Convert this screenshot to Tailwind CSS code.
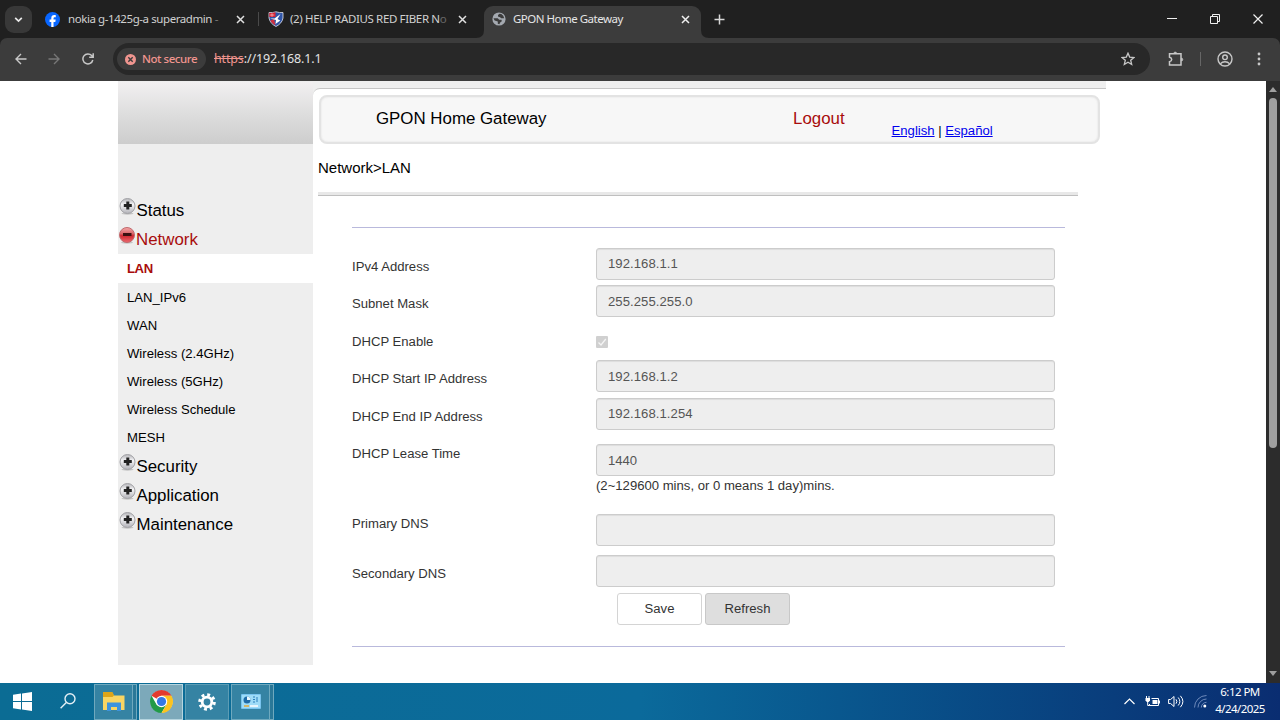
<!DOCTYPE html>
<html lang="en">
<head>
    <meta charset="UTF-8">
    <meta name="viewport" content="width=device-width, initial-scale=1.0">
    <title>GPON Home Gateway</title>
    <script src="https://cdn.jsdelivr.net/npm/@tailwindcss/browser@4"></script>
</head>
<body class="w-[1280px] h-[720px] overflow-hidden flex flex-col bg-[#202020] font-['Liberation_Sans',Arial,sans-serif]">

    <!-- Tab strip -->
    <div class="h-[38px] shrink-0 flex items-center pl-[5px] bg-[#202020] text-[#d0d0d0] text-[11.5px] font-['Noto_Sans','Open_Sans',sans-serif]">
        <div class="size-[27px] rounded-[9px] bg-[#383838] flex items-center justify-center">
            <svg class="size-[9px]" viewBox="0 0 9 9" fill="none" stroke="#e8e8e8" stroke-width="1.7"><path d="M1.2 2.8l3.3 3.3 3.3-3.3"/></svg>
        </div>

        <div class="w-[227px] flex items-center pl-[13px]">
            <svg class="size-[15px] mr-[8px]" viewBox="0 0 16 16"><circle cx="8" cy="8" r="8" fill="#0866ff"/><path d="M6.700 16v-5.400H4.900V8h1.800V6.800c0-2.500 1.200-3.600 3.300-3.600.6 0 1.100.1 1.500.2v2.200h-1c-1 0-1.400.5-1.400 1.500V8h2.300l-.4 2.600H9.100V16z" fill="#fff"/></svg>
            <span class="w-[153px] whitespace-nowrap tracking-[-0.42px]">nokia g-1425g-a superadmin <span class="opacity-50">-</span></span>
            <svg class="size-[9px] ml-[15px]" viewBox="0 0 9 9" stroke="#e0e0e0" stroke-width="1.5"><path d="M1 1l7 7M8 1L1 8"/></svg>
        </div>
        <div class="w-px h-[14px] bg-[#4a4a4a] -ml-px"></div>

        <div class="w-[225px] flex items-center pl-[9px]">
            <svg class="size-[16px] mr-[6px]" viewBox="0 0 16 16">
                <path d="M1 1.500Q4.500 2 8 .8 11.500 2 15 1.500V7Q14 12.500 8 15.500 2 12.500 1 7z" fill="#2f55a8" stroke="#e6e6ee" stroke-width=".8"/>
                <path d="M1.300 1.800Q4 2.200 7.500 1.300V6H1.300z" fill="#d92332"/>
                <path d="M2.200 9.500L6 8l1.500 6.500Q3.500 12.500 2.200 9.500z" fill="#cf3040"/>
                <path d="M1.800 4h4.500M4 2.300v3.500" stroke="#f3c9cc" stroke-width=".7"/>
                <path d="M2 7.500h4.500L12.500 3 9.500 8l2.800 1.500L7.500 13 8 9z" fill="#fff"/>
            </svg>
            <span class="w-[158px] whitespace-nowrap tracking-[-0.36px]">(2) HELP RADIUS RED FIBER N<span class="opacity-40">o</span></span>
            <svg class="size-[9px] ml-[10px]" viewBox="0 0 9 9" stroke="#e0e0e0" stroke-width="1.5"><path d="M1 1l7 7M8 1L1 8"/></svg>
        </div>

        <div class="relative w-[217px] h-[32px] self-end rounded-t-[9px] bg-[#3c3c3c] flex items-center pb-[6px] pl-[8px] text-[#e6e6e6]">
            <svg class="absolute bottom-0 -left-[8px] size-[8px]" viewBox="0 0 8 8"><path d="M8 0v8H0Q8 8 8 0z" fill="#3c3c3c"/></svg>
            <svg class="absolute bottom-0 -right-[8px] size-[8px]" viewBox="0 0 8 8"><path d="M0 0v8h8Q0 8 0 0z" fill="#3c3c3c"/></svg>
            <svg class="size-[14px] mr-[7px]" viewBox="0 0 14 14"><circle cx="7" cy="7" r="6.600" fill="#a4a9b0"/><path d="M1.500 6.200h4.200l1.500 1.500h2.300l.3 1.500-1.600 1.200-.8 1.800-1.600-.4V9.600L2.600 8.400zM7.500 1.700L6 3v1.600l2 .7 1.300 1h2.900Q11.800 3 9.300 1.900z" fill="#3c3c3c"/></svg>
            <span class="w-[160px] tracking-[-0.5px]">GPON Home Gateway</span>
            <svg class="size-[9px] ml-[8px]" viewBox="0 0 9 9" stroke="#f0f0f0" stroke-width="1.500"><path d="M1 1l7 7M8 1L1 8"/></svg>
        </div>
        <svg class="size-[11px] ml-[13px]" viewBox="0 0 11 11" stroke="#d8d8d8" stroke-width="1.500"><path d="M5.500.5v10M.5 5.500h10"/></svg>

        <div class="ml-auto pr-[17px] flex items-center gap-[33px]">
            <svg class="size-[10px]" viewBox="0 0 10 10" stroke="#f0f0f0"><path d="M0 4.500h10"/></svg>
            <svg class="size-[10px]" viewBox="0 0 10 10" fill="none" stroke="#f0f0f0"><path d="M.5 2.500h7v7h-7zM2.500 2.500v-2h7v7h-2"/></svg>
            <svg class="size-[10px]" viewBox="0 0 10 10" stroke="#f0f0f0" stroke-width="1.200"><path d="M.5.5l9 9M9.500.5l-9 9"/></svg>
        </div>
    </div>

    <!-- Toolbar -->
    <div class="h-[43px] shrink-0 rounded-t-[7px] bg-[#3c3c3c] flex items-center pl-[15px] pr-[16px] pb-px font-['Noto_Sans','Open_Sans',sans-serif]">
        <svg class="size-[12px]" viewBox="0 0 12 12" fill="none" stroke="#c8c8c8" stroke-width="1.400"><path d="M11.500 6H1M6 1L1 6l5 5"/></svg>
        <svg class="size-[12px] ml-[21px]" viewBox="0 0 12 12" fill="none" stroke="#777" stroke-width="1.400"><path d="M.5 6H11M6 1l5 5-5 5"/></svg>
        <svg class="size-[12px] ml-[22px]" viewBox="0 0 12 12" fill="none" stroke="#c8c8c8" stroke-width="1.500"><path d="M10.800 7A5 5 0 1 1 9.700 2.600L11 4M11.200.3v4H7.200"/></svg>
        <div class="w-[1037px] h-[32px] ml-[19px] rounded-full bg-[#282828] flex items-center pl-[4px] pr-[15px]">
            <div class="w-[89px] h-[22px] rounded-full bg-[#3c3c3c] flex items-center pl-[8px] text-[11.5px] text-[#f0958f] font-medium whitespace-nowrap tracking-[-0.45px]">
                <svg class="size-[11px] mr-[6px] shrink-0" viewBox="0 0 11 11"><circle cx="5.500" cy="5.500" r="5.500" fill="#f0958f"/><path d="M3.300 3.300l4.400 4.400M7.700 3.300L3.300 7.700" stroke="#3c3c3c" stroke-width="1.400"/></svg>
                Not secure
            </div>
            <div class="ml-[8px] pt-px text-[12.5px] text-[#e3e3e3] tracking-[-0.15px]"><span class="text-[#f0958f] line-through">https</span>://192.168.1.1</div>
            <svg class="size-[14px] ml-auto" viewBox="0 0 14 14" fill="none" stroke="#c8c8c8" stroke-width="1.300"><path d="M7 1.200l1.700 3.900 4.200.4-3.200 2.800 1 4.200L7 10.300l-3.700 2.200 1-4.200L1.100 5.500l4.200-.4z"/></svg>
        </div>
        <svg class="size-[16px] ml-[18px]" viewBox="0 0 16 16" fill="none" stroke="#c8c8c8" stroke-width="1.500"><path d="M1.500 2.800h11.500v11.200H1.500v-3.400Q3.700 10 3.700 8.400T1.500 6.200z"/><path d="M5.700 2.500a1.500 1.500 0 0 1 3 0zM13.300 7a1.500 1.500 0 0 1 0 3z" fill="#c8c8c8" stroke-width=".6"/></svg>
        <div class="w-px h-[14px] ml-[16px] bg-[#666]"></div>
        <svg class="size-[16px] ml-[16px]" viewBox="0 0 16 16" fill="none" stroke="#c8c8c8" stroke-width="1.400"><circle cx="8" cy="8" r="7"/><circle cx="8" cy="6.300" r="2.300"/><path d="M3.300 12.900q1.900-2.200 4.700-2.200t4.700 2.200"/></svg>
        <svg class="w-[4px] h-[14px] ml-auto mr-[3px]" viewBox="0 0 4 14" fill="#c8c8c8"><circle cx="2" cy="2" r="1.400"/><circle cx="2" cy="7" r="1.400"/><circle cx="2" cy="12" r="1.400"/></svg>
    </div>

    <!-- Page -->
    <div class="h-[602px] shrink-0 flex bg-white text-black">
        <div class="w-[195px] h-[584px] ml-[118px] bg-[#eee] pt-px">
            <div class="h-[62px] bg-gradient-to-b from-[#f2f0f1] via-[#dedede] to-[#cdcdcd]"></div>
            <div class="h-[52px]"></div>
            <ul class="text-[16.875px]">
                <li class="h-[29px] flex items-center pl-px">
                    <svg class="w-[17px] h-[19px] mr-[0.5px] mb-[8px]" viewBox="0 0 17 19"><defs><linearGradient id="gray" x2="0" y2="1"><stop offset="0" stop-color="#b4b4b8"/><stop offset=".4" stop-color="#f4f4f6"/><stop offset="1" stop-color="#b2b2b8"/></linearGradient><linearGradient id="red" x2="0" y2="1"><stop offset="0" stop-color="#f6a9a9"/><stop offset=".4" stop-color="#d9666a"/><stop offset=".55" stop-color="#cf2830"/><stop offset="1" stop-color="#ee6a70"/></linearGradient></defs><ellipse cx="8.500" cy="16.500" rx="6" ry="1.200" fill="#c4c4c4"/><circle cx="8.500" cy="9" r="7.500" fill="url(#gray)" stroke="#a2a2a6"/><path d="M8.800 4.500v8M4.800 8.500h8" stroke="#222" stroke-width="3"/></svg>Status
                </li>
                <li class="h-[29px] flex items-center pl-px text-[#a80c0c]">
                    <svg class="w-[17px] h-[19px] mb-[8px]" viewBox="0 0 17 19"><ellipse cx="8" cy="16.500" rx="6" ry="1.200" fill="#c4c4c4"/><circle cx="8" cy="9" r="7.500" fill="url(#red)" stroke="#c06a6e"/><path d="M4 8.500h8.500" stroke="#3a1010" stroke-width="3"/></svg>Network
                </li>
                <li class="text-[13.125px]">
                    <div class="h-[29px] mb-px bg-white flex items-center pl-[9px] font-bold tracking-[-0.4px] text-[#a80c0c]">LAN</div>
                    <div class="h-[28px] flex items-center pl-[9px]">LAN_IPv6</div>
                    <div class="h-[28px] flex items-center pl-[9px]">WAN</div>
                    <div class="h-[28px] flex items-center pl-[9px]">Wireless (2.4GHz)</div>
                    <div class="h-[28px] flex items-center pl-[9px]">Wireless (5GHz)</div>
                    <div class="h-[28px] flex items-center pl-[9px]">Wireless Schedule</div>
                    <div class="h-[28px] flex items-center pl-[9px]">MESH</div>
                </li>
                <li class="h-[29px] flex items-center pl-px">
                    <svg class="w-[17px] h-[19px] mr-[0.5px] mb-[8px]" viewBox="0 0 17 19"><ellipse cx="8.500" cy="16.500" rx="6" ry="1.200" fill="#c4c4c4"/><circle cx="8.500" cy="9" r="7.500" fill="url(#gray)" stroke="#a2a2a6"/><path d="M8.800 4.500v8M4.800 8.500h8" stroke="#222" stroke-width="3"/></svg>Security
                </li>
                <li class="h-[29px] flex items-center pl-px">
                    <svg class="w-[17px] h-[19px] mr-[0.5px] mb-[8px]" viewBox="0 0 17 19"><ellipse cx="8.500" cy="16.500" rx="6" ry="1.200" fill="#c4c4c4"/><circle cx="8.500" cy="9" r="7.500" fill="url(#gray)" stroke="#a2a2a6"/><path d="M8.800 4.500v8M4.800 8.500h8" stroke="#222" stroke-width="3"/></svg>Application
                </li>
                <li class="h-[29px] flex items-center pl-px">
                    <svg class="w-[17px] h-[19px] mr-[0.5px] mb-[8px]" viewBox="0 0 17 19"><ellipse cx="8.500" cy="16.500" rx="6" ry="1.200" fill="#c4c4c4"/><circle cx="8.500" cy="9" r="7.500" fill="url(#gray)" stroke="#a2a2a6"/><path d="M8.800 4.500v8M4.800 8.500h8" stroke="#222" stroke-width="3"/></svg>Maintenance
                </li>
            </ul>
        </div>

        <div class="w-[793px]">
            <div class="h-[14px] pt-[7px] bg-[#efefef]">
                <div class="h-[7px] rounded-tl-[7px] border-t border-[#c6c6c6] bg-white"></div>
            </div>
            <div class="w-[781px] h-[49px] ml-[6px] rounded-[8px] border-2 border-[#e3e3e3] bg-[#f7f7f7] shadow-[inset_0_0_2px_#dcdcdc] flex">
                <div class="w-[418px] pl-[55px] pt-[9px] text-[16.875px]">GPON Home Gateway</div>
                <div class="ml-[54px] pt-[9px] text-[16.875px] text-[#a80c0c]">Logout</div>
                <div class="ml-[47px] pt-[24px] text-[13.125px] leading-[20px] whitespace-nowrap"><span class="text-[#0000ee] underline">English</span> | <span class="text-[#0000ee] underline">Español</span></div>
            </div>
            <div class="h-[48px] ml-[5px] flex items-center text-[15px]">Network&gt;LAN</div>
            <div class="w-[760px] h-[4px] ml-[5px] bg-[#e8e8e8] border-b border-[#bfbfbf]"></div>

            <form class="w-[713px] ml-[39px] mt-[31px] h-[420px] border-y border-[#b9b9dc] pt-[19.500px] text-[13.125px] text-[#333]">
                <div class="h-[37.500px] flex">
                    <label class="w-[244px] pt-[9px]">IPv4 Address</label>
                    <input class="w-[459px] h-[32px] rounded-[3px] border border-[#ccc] bg-[#eee] px-[11px] tracking-[0.06px] text-[#555] shadow-[inset_0_1px_1px_rgba(0,0,0,0.075)]" value="192.168.1.1" disabled>
                </div>
                <div class="h-[37.500px] flex">
                    <label class="w-[244px] pt-[9px]">Subnet Mask</label>
                    <input class="w-[459px] h-[32px] rounded-[3px] border border-[#ccc] bg-[#eee] px-[11px] tracking-[0.06px] text-[#555] shadow-[inset_0_1px_1px_rgba(0,0,0,0.075)]" value="255.255.255.0" disabled>
                </div>
                <div class="h-[37.500px] flex">
                    <label class="w-[244px] pt-[9px]">DHCP Enable</label>
                    <svg class="size-[12px] mt-[13px]" viewBox="0 0 12 12"><rect width="12" height="12" rx="1" fill="#d0d0d0"/><path d="M2.500 6.500L5 9l4.800-6" fill="none" stroke="#f4f4f4" stroke-width="1.300"/></svg>
                </div>
                <div class="h-[37.500px] flex">
                    <label class="w-[244px] pt-[9px]">DHCP Start IP Address</label>
                    <input class="w-[459px] h-[32px] rounded-[3px] border border-[#ccc] bg-[#eee] px-[11px] tracking-[0.06px] text-[#555] shadow-[inset_0_1px_1px_rgba(0,0,0,0.075)]" value="192.168.1.2" disabled>
                </div>
                <div class="h-[37.500px] flex">
                    <label class="w-[244px] pt-[9px]">DHCP End IP Address</label>
                    <input class="w-[459px] h-[32px] rounded-[3px] border border-[#ccc] bg-[#eee] px-[11px] tracking-[0.06px] text-[#555] shadow-[inset_0_1px_1px_rgba(0,0,0,0.075)]" value="192.168.1.254" disabled>
                </div>
                <div class="h-[79px] flex">
                    <label class="w-[244px] pt-[9px]">DHCP Lease Time</label>
                    <div class="pt-[9px]">
                        <input class="block w-[459px] h-[32px] rounded-[3px] border border-[#ccc] bg-[#eee] px-[11px] text-[#555] shadow-[inset_0_1px_1px_rgba(0,0,0,0.075)]" value="1440" disabled>
                        <p class="leading-[19px]">(2~129600 mins, or 0 means 1 day)mins.</p>
                    </div>
                </div>
                <div class="h-[41px] flex">
                    <label class="w-[244px]">Primary DNS</label>
                    <input class="w-[459px] h-[32px] rounded-[3px] border border-[#ccc] bg-[#eee] shadow-[inset_0_1px_1px_rgba(0,0,0,0.075)]" disabled>
                </div>
                <div class="h-[38px] flex">
                    <label class="w-[244px] pt-[9px]">Secondary DNS</label>
                    <input class="w-[459px] h-[32px] rounded-[3px] border border-[#ccc] bg-[#eee] shadow-[inset_0_1px_1px_rgba(0,0,0,0.075)]" disabled>
                </div>
                <div class="flex gap-[3px] pl-[265px]">
                    <button class="w-[85px] h-[32px] rounded-[3px] border border-[#d4d4d4] bg-white">Save</button>
                    <button class="w-[85px] h-[32px] rounded-[3px] border border-[#c8c8c8] bg-[#dedede]">Refresh</button>
                </div>
            </form>
        </div>

        <!-- Scrollbar -->
        <div class="w-[14px] ml-auto bg-[#2c2c2c] flex flex-col items-center">
            <svg class="w-[8px] h-[5px] mt-[6px]" viewBox="0 0 8 5"><path d="M4 0l4 5H0z" fill="#9f9f9f"/></svg>
            <div class="w-[8px] h-[350px] mt-[6px] rounded-full bg-[#9f9f9f]"></div>
            <svg class="w-[8px] h-[5px] mt-auto mb-[7px]" viewBox="0 0 8 5"><path d="M4 5l4-5H0z" fill="#9f9f9f"/></svg>
        </div>
    </div>

    <!-- Taskbar -->
    <div class="h-[37px] shrink-0 flex items-center pl-[13px] pr-[15px] bg-gradient-to-r from-[#0b6c94] via-[#0b6a9b] to-[#0a2d71] text-white">
        <svg class="size-[19px] mb-px" viewBox="0 0 19 19" fill="#fff"><path d="M0 2.700l8-1.100V9H0zM9 1.400L19 0v9H9zM0 10h8v7.400l-8-1.100zM9 10h10v9L9 17.600z"/></svg>
        <svg class="size-[16px] ml-[28px] mb-px" viewBox="0 0 16 16" fill="none" stroke="#e4f0f6" stroke-width="1.400"><circle cx="10" cy="5.800" r="5"/><path d="M6.300 9.400L.6 15.300"/></svg>
        <div class="w-[39px] h-[36px] ml-[18px] border border-[#6fa9be] bg-[#3583a3] flex items-center justify-center">
            <svg class="w-[22px] h-[19px]" viewBox="0 0 22 19"><path d="M0 1h9l2 2.500h10.500V18H0z" fill="#f9d563"/><path d="M0 0h9.500l1.500 3.500L9.500 5H0z" fill="#dda51a"/><path d="M4 19v-8.500h14V19h-4v-4H8v4z" fill="#3d93df"/></svg>
        </div>
        <div class="w-[4px] h-[36px] border-r border-y border-[#6fa9be] bg-[#2a7898]"></div>
        <div class="w-[44px] h-[36px] ml-[2px] border border-[#b5d5df] bg-[#7ca9ba] flex items-center justify-center">
            <svg class="size-[23px]" viewBox="0 0 24 24"><circle cx="12" cy="12" r="11.500" fill="#fff"/><path d="M12 12L1.610 6A12 12 0 0 1 22.390 6H12z" fill="#e33b2e"/><path d="M6.800 15L1.610 6A12 12 0 0 0 12 24l5.200-9z" fill="#229a48"/><path d="M17.200 15L12 24A12 12 0 0 0 22.390 6H12z" fill="#fcc31e"/><circle cx="12" cy="12" r="6" fill="#fff"/><circle cx="12" cy="12" r="4.800" fill="#3478e5"/></svg>
        </div>
        <div class="w-[44px] h-[36px] ml-[2px] border border-[#5c9db5] bg-[#3583a3] flex items-center justify-center">
            <svg class="size-[18px]" viewBox="0 0 18 18" fill="none" stroke="#fff"><circle cx="9" cy="9" r="4.800" stroke-width="2.800"/><circle cx="9" cy="9" r="7.300" stroke-width="3" stroke-dasharray="2.870 2.860"/></svg>
        </div>
        <div class="w-[39px] h-[36px] ml-[2px] border border-[#6fa9be] bg-[#3583a3] flex items-center justify-center">
            <svg class="w-[20px] h-[15px]" viewBox="0 0 20 15"><rect width="20" height="15" rx="1" fill="#79c4ef"/><rect x="1" y="1" width="18" height="13" fill="#9edcf8"/><circle cx="6" cy="6" r="3.500" fill="#1f6ca8"/><path d="M6 6V2.500A3.500 3.500 0 0 1 9.500 6z" fill="#e9f6fd"/><path d="M12 3h2M12 5.500h2M12 8h2M16 3v5" stroke="#2b7fbb"/><path d="M3 12h5" stroke="#e2a93b" stroke-width="1.500"/><path d="M9 12h8" stroke="#fff" stroke-width="1.500"/></svg>
        </div>
        <div class="w-[4px] h-[36px] border-r border-y border-[#6fa9be] bg-[#2a7898]"></div>

        <div class="ml-auto flex items-center font-['Noto_Sans','Open_Sans',sans-serif]">
            <svg class="w-[11px] h-[7px]" viewBox="0 0 11 7" fill="none" stroke="#fff" stroke-width="1.200"><path d="M.5 6l5-5 5 5"/></svg>
            <svg class="w-[15px] h-[12px] ml-[10px]" viewBox="0 0 15 12" fill="none" stroke="#fff"><path d="M6.500 2.500h7v7H4.500V8M14.500 4.500v3"/><path d="M7.500 4h5v4h-5z" fill="#fff" stroke="none"/><path d="M1.500 0v2M4 0v2M2.700 5v4.500h2"/><path d="M.5 2H5v2.500L3.700 6H1.800L.5 4.500z" fill="#fff" stroke="none"/></svg>
            <svg class="w-[16px] h-[13px] ml-[8px]" viewBox="0 0 16 13" fill="none" stroke="#fff"><path d="M.6 4.500h2L6 1.500v10l-3.400-3H.6zM8 4.300q1.700 2.200 0 4.400M10.200 2.500q3.300 4 0 8M12.400.8q5 5.700 0 11.400"/></svg>
            <svg class="w-[13px] h-[13px] ml-[10px]" viewBox="0 0 13 13" fill="none" stroke="#6e8abb"><path d="M.5 12.500a12 12 0 0 1 12-12M4 12.500a8.500 8.500 0 0 1 8.500-8.500M7.300 12.500a5.200 5.200 0 0 1 5.200-5.200"/><circle cx="10.800" cy="11" r="1.500" fill="#fff" stroke="none"/></svg>
            <div class="w-[50px] ml-[8px] pb-[3px] text-center text-[11.5px] leading-[17px] tracking-[-0.55px] whitespace-nowrap"><p>6:12 PM</p><p>4/24/2025</p></div>
        </div>
    </div>
</body>
</html>
